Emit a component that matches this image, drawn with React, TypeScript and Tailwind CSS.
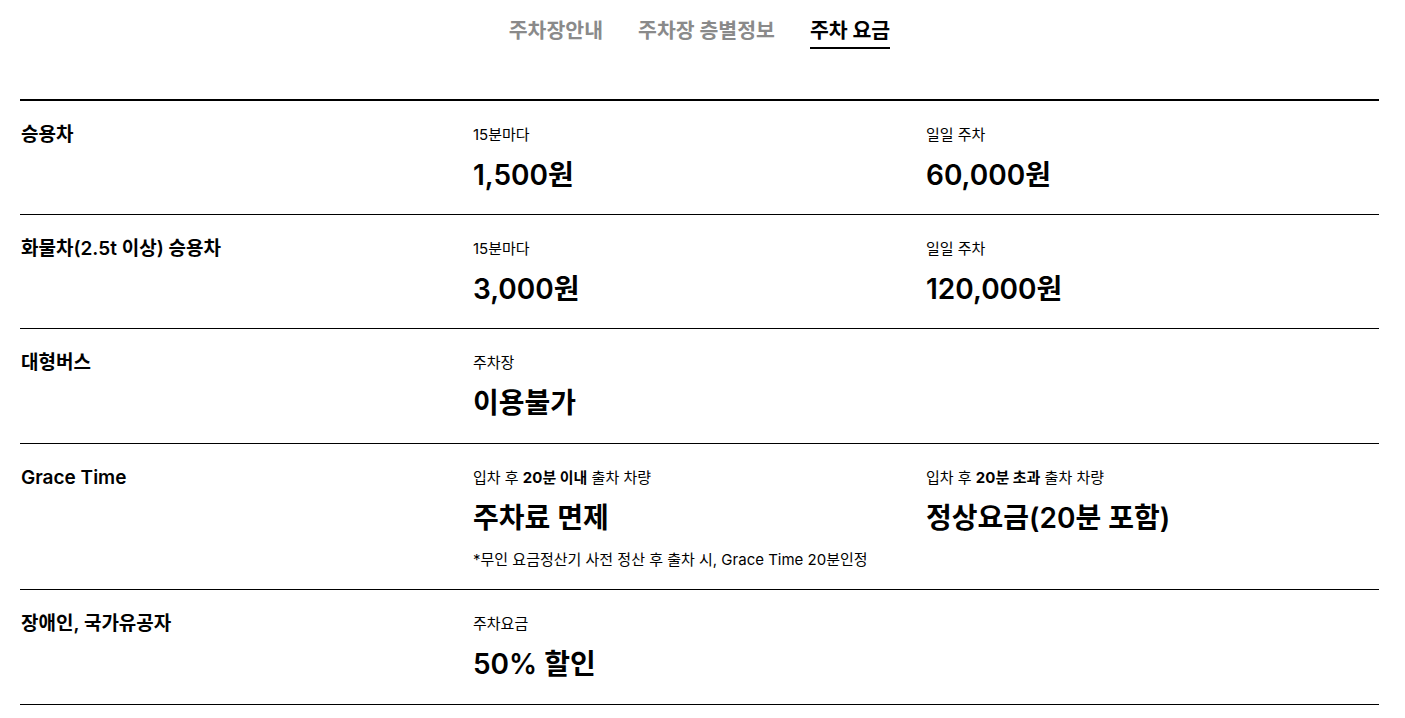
import React from 'react';

type Cell = { caption: React.ReactNode; value: string; note?: string };
type Row = { label: string; pad: string; cells: Cell[] };

const rows: Row[] = [
  {
    label: '승용차',
    pad: 'pb-[19px]',
    cells: [
      { caption: '15분마다', value: '1,500원' },
      { caption: '일일 주차', value: '60,000원' },
    ],
  },
  {
    label: '화물차(2.5t 이상) 승용차',
    pad: 'pb-[19px]',
    cells: [
      { caption: '15분마다', value: '3,000원' },
      { caption: '일일 주차', value: '120,000원' },
    ],
  },
  {
    label: '대형버스',
    pad: 'pb-5',
    cells: [{ caption: '주차장', value: '이용불가' }],
  },
  {
    label: 'Grace Time',
    pad: 'pb-[19px]',
    cells: [
      {
        caption: (
          <>
            입차 후 <b className="font-bold">20분 이내</b> 출차 차량
          </>
        ),
        value: '주차료 면제',
        note: '*무인 요금정산기 사전 정산 후 출차 시, Grace Time 20분인정',
      },
      {
        caption: (
          <>
            입차 후 <b className="font-bold">20분 초과</b> 출차 차량
          </>
        ),
        value: '정상요금(20분 포함)',
      },
    ],
  },
  {
    label: '장애인, 국가유공자',
    pad: 'pb-5',
    cells: [{ caption: '주차요금', value: '50% 할인' }],
  },
];

const tabs = ['주차장안내', '주차장 층별정보', '주차 요금'];

export default function App() {
  return (
    <div
      className="min-h-screen bg-white text-black"
      style={{ fontFamily: 'Inter, "Noto Sans CJK KR", sans-serif' }}
    >
      <nav className="flex justify-center gap-[35px] pt-[17px] pr-[6px]">
        {tabs.map((t, i) => {
          const active = i === tabs.length - 1;
          return (
            <div
              key={t}
              className={`text-[20.5px] font-bold leading-7 pb-[2px] border-b-2 ${
                active ? 'text-black border-black' : 'text-[#8a8a8a] border-transparent'
              }`}
            >
              {t}
            </div>
          );
        })}
      </nav>

      <div className="ml-5 mr-[26px] mt-[50px] border-t-2 border-black">
        {rows.map((row) => (
          <div key={row.label} className={`grid grid-cols-3 border-b border-black pt-6 ${row.pad}`}>
            <div className="pl-px text-[19px] font-semibold leading-5">{row.label}</div>
            {row.cells.map((c, i) => (
              <div key={i}>
                <div className="text-[15px] leading-5">{c.caption}</div>
                <div className="mt-[10px] text-[28px] font-semibold leading-10">{c.value}</div>
                {c.note && <div className="mt-3 text-[15px] leading-5">{c.note}</div>}
              </div>
            ))}
          </div>
        ))}
      </div>
    </div>
  );
}
